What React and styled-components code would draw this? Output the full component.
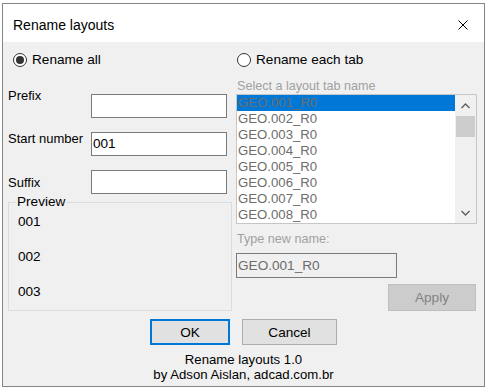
import React from "react";
import styled, { createGlobalStyle } from "styled-components";

const GlobalStyle = createGlobalStyle`
  body {
    margin: 0;
    background: #ffffff;
    font-family: "Liberation Sans", Arial, sans-serif;
    color: #000;
  }
`;

const layouts = Array.from({ length: 8 }, (v, i) => `GEO.00${i + 1}_R0`);
const preview = ["001", "002", "003"];

const App = () => {
  return (
    <>
      <GlobalStyle />
      <Window>
        <TitleBar>
          <Title>Rename layouts</Title>
          <CloseIcon width="10" height="10" viewBox="0 0 10 10">
            <path d="M0.5 0.5 L9.5 9.5 M9.5 0.5 L0.5 9.5" stroke="#000" strokeWidth="1" fill="none" />
          </CloseIcon>
        </TitleBar>
        <Content>
          <Columns>
            <LeftColumn>
              <RadioRow $indent={5}>
                <Radio $checked />
                <RadioText>Rename all</RadioText>
              </RadioRow>
              <Fields>
                <FieldRow>
                  <FieldLabel $shift={0}>Prefix</FieldLabel>
                  <TextBox />
                </FieldRow>
                <FieldRow>
                  <FieldLabel $shift={5}>Start number</FieldLabel>
                  <TextBox>001</TextBox>
                </FieldRow>
                <FieldRow>
                  <FieldLabel $shift={11}>Suffix</FieldLabel>
                  <TextBox />
                </FieldRow>
              </Fields>
              <Group>
                <Legend>Preview</Legend>
                {preview.map((p) => (
                  <PreviewItem key={p}>{p}</PreviewItem>
                ))}
              </Group>
            </LeftColumn>

            <RightColumn>
              <RadioRow $indent={1}>
                <Radio />
                <RadioText>Rename each tab</RadioText>
              </RadioRow>
              <DimLabel $top={10}>Select a layout tab name</DimLabel>
              <ListBox>
                <ListItems>
                  {layouts.map((name, i) => (
                    <ListItem key={name} $selected={i === 0}>
                      {name}
                    </ListItem>
                  ))}
                </ListItems>
                <ScrollBar>
                  <Arrow width="9" height="6" viewBox="0 0 9 6">
                    <polyline points="0.5,5 4.5,1 8.5,5" stroke="#606060" strokeWidth="1.4" fill="none" />
                  </Arrow>
                  <Thumb />
                  <ScrollSpacer />
                  <Arrow width="9" height="6" viewBox="0 0 9 6">
                    <polyline points="0.5,1 4.5,5 8.5,1" stroke="#606060" strokeWidth="1.4" fill="none" />
                  </Arrow>
                </ScrollBar>
              </ListBox>
              <DimLabel $top={7}>Type new name:</DimLabel>
              <DisabledBox>GEO.001_R0</DisabledBox>
              <ApplyButton>Apply</ApplyButton>
            </RightColumn>
          </Columns>

          <ButtonRow>
            <Button $default $width={80}>OK</Button>
            <Button $width={95}>Cancel</Button>
          </ButtonRow>
          <Footer>
            Rename layouts 1.0
            <br />
            by Adson Aislan, adcad.com.br
          </Footer>
        </Content>
      </Window>
    </>
  );
};

const Window = styled.div`
  margin: 3px 0 0 2px;
  width: 483px;
  height: 384px;
  box-sizing: border-box;
  border: 1px solid #858585;
  background: #f0f0f0;
  display: flex;
  flex-direction: column;
`;

const TitleBar = styled.div`
  height: 38px;
  background: #ffffff;
  display: flex;
  align-items: center;
  justify-content: space-between;
  padding: 0 16px 0 10px;
  box-sizing: border-box;
`;

const Title = styled.span`
  font-size: 14px;
  line-height: 16px;
  margin-top: 3px;
`;

const CloseIcon = styled.svg`
  display: block;
  margin-top: 4px;
`;

const Content = styled.div`
  flex: 1;
  display: flex;
  flex-direction: column;
  padding: 10px 0 0 5px;
`;

const Columns = styled.div`
  display: grid;
  grid-template-columns: 228px 241px;
  align-items: start;
`;

const LeftColumn = styled.div`
  display: flex;
  flex-direction: column;
`;

const RightColumn = styled.div`
  display: flex;
  flex-direction: column;
`;

const RadioRow = styled.div`
  display: flex;
  align-items: center;
  height: 16px;
  padding-left: ${(p) => p.$indent}px;
  gap: 5px;
`;

const Radio = styled.span`
  width: 14px;
  height: 14px;
  box-sizing: border-box;
  border: 1px solid #333333;
  border-radius: 50%;
  background: #ffffff;
  display: flex;
  align-items: center;
  justify-content: center;
  &::after {
    content: "";
    display: ${(p) => (p.$checked ? "block" : "none")};
    width: 8px;
    height: 8px;
    border-radius: 50%;
    background: #333333;
  }
`;

const RadioText = styled.span`
  font-size: 13.6px;
  line-height: 16px;
`;

const Fields = styled.div`
  display: flex;
  flex-direction: column;
  margin-top: 20px;
`;

const FieldRow = styled.div`
  display: flex;
  align-items: flex-start;
  height: 38px;
`;

const FieldLabel = styled.span`
  width: 83px;
  font-size: 13px;
  line-height: 16px;
  margin-top: ${(p) => p.$shift}px;
`;

const TextBox = styled.div`
  width: 136px;
  height: 24px;
  margin-top: 6px;
  box-sizing: border-box;
  border: 1px solid #7a7a7a;
  background: #ffffff;
  font-size: 13.6px;
  line-height: 22px;
  padding-left: 1px;
`;

const Group = styled.fieldset`
  margin: -8px 0 0 0;
  width: 224px;
  height: 117px;
  box-sizing: border-box;
  border: 1px solid #dcdcdc;
  padding: 0 0 0 9px;
  display: flex;
  flex-direction: column;
`;

const Legend = styled.legend`
  font-size: 13.6px;
  line-height: 16px;
  padding: 0 1px;
  margin-left: -2px;
`;

const PreviewItem = styled.div`
  font-size: 13.6px;
  line-height: 16px;
  height: 35px;
  &:first-of-type {
    margin-top: 4px;
  }
`;

const DimLabel = styled.div`
  margin-top: ${(p) => p.$top}px;
  padding-left: 1px;
  font-size: 12.6px;
  line-height: 16px;
  color: #a0a0a0;
`;

const ListBox = styled.div`
  width: 241px;
  height: 130px;
  box-sizing: border-box;
  border: 1px solid #c6c6c6;
  background: #ffffff;
  display: flex;
  overflow: hidden;
`;

const ListItems = styled.div`
  flex: 1;
  display: flex;
  flex-direction: column;
`;

const ListItem = styled.div`
  height: 16px;
  flex-shrink: 0;
  font-size: 13.2px;
  line-height: 16px;
  padding-left: 1px;
  color: #6d6d6d;
  background: ${(p) => (p.$selected ? "#0078d7" : "transparent")};
`;

const ScrollBar = styled.div`
  width: 21px;
  background: #f0f0f0;
  display: flex;
  flex-direction: column;
  align-items: center;
  padding: 8px 0 7px;
  box-sizing: border-box;
`;

const Arrow = styled.svg`
  display: block;
`;

const Thumb = styled.div`
  width: 19px;
  height: 21px;
  margin-top: 7px;
  background: #cdcdcd;
`;

const ScrollSpacer = styled.div`
  flex: 1;
`;

const DisabledBox = styled.div`
  margin-top: 6px;
  width: 161px;
  height: 25px;
  box-sizing: border-box;
  border: 1px solid #7a7a7a;
  background: #f0f0f0;
  font-size: 13.6px;
  line-height: 23px;
  padding-left: 1px;
  color: #6d6d6d;
`;

const ApplyButton = styled.div`
  align-self: flex-end;
  margin: 6px 1px 0 0;
  width: 88px;
  height: 27px;
  box-sizing: border-box;
  border: 1px solid #bfbfbf;
  background: #cccccc;
  color: #838383;
  font-size: 13.6px;
  display: flex;
  align-items: center;
  justify-content: center;
`;

const ButtonRow = styled.div`
  display: flex;
  justify-content: center;
  gap: 12px;
  margin-top: 8px;
  padding-right: 5px;
`;

const Button = styled.div`
  width: ${(p) => p.$width}px;
  height: 26px;
  box-sizing: border-box;
  border: ${(p) => (p.$default ? "2px solid #0078d7" : "1px solid #adadad")};
  background: #e1e1e1;
  font-size: 13.6px;
  display: flex;
  align-items: center;
  justify-content: center;
`;

const Footer = styled.div`
  margin-top: 7px;
  padding-right: 5px;
  text-align: center;
  font-size: 13.2px;
  line-height: 15px;
`;

export default App;
